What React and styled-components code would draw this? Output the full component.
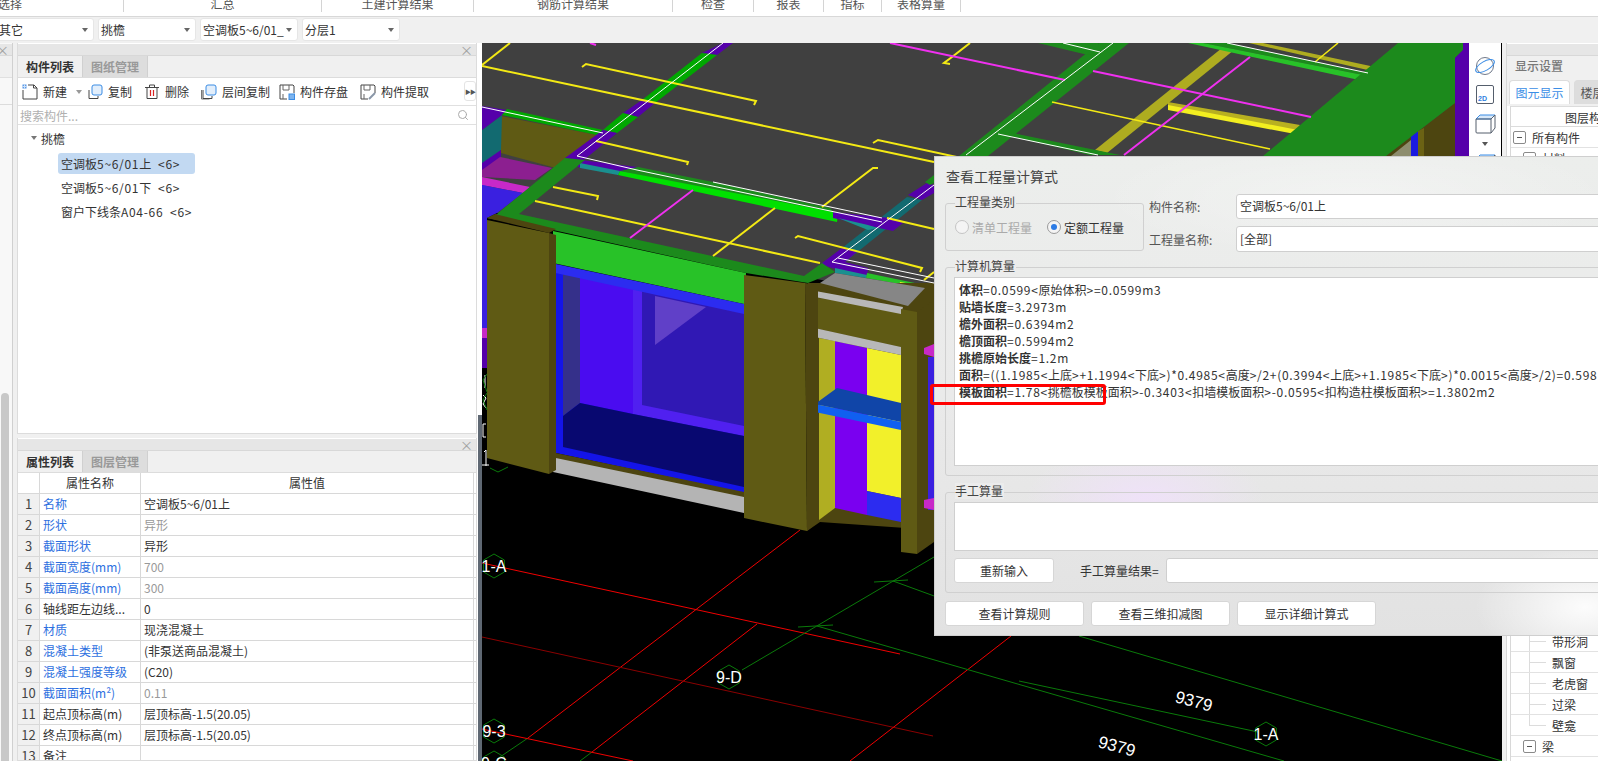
import React from "react";
import styled, { createGlobalStyle } from "styled-components";
import { Search } from "lucide-react";

const FONT = `"Noto Sans CJK SC", "Noto Sans", sans-serif`;

const Global = createGlobalStyle`
  html, body { margin: 0; padding: 0; height: 100%; overflow: hidden; background: #f0f0f0; }
  #root { height: 100%; }
  * { box-sizing: border-box; }
`;

const Page = styled.div`
  position: relative;
  width: 1598px;
  height: 761px;
  overflow: hidden;
  display: flex;
  flex-direction: column;
  font-family: ${FONT};
  font-size: 12px;
  color: #333;
  background: #f0f0f0;
`;

/* top ribbon */
const Ribbon = styled.div`
  height: 17px;
  flex: none;
  display: flex;
  background: #fff;
  border-bottom: 1px solid #d8d8d8;
  overflow: hidden;
`;
const RibbonCell = styled.div`
  width: ${p => p.$w}px;
  height: 12px;
  line-height: 8px;
  text-align: ${p => (p.$start ? "left" : "center")};
  text-indent: ${p => (p.$start ? "-2px" : "0")};
  color: #555;
  white-space: nowrap;
  border-right: 1px solid #d4d4d4;
`;

/* combo row */
const ComboRow = styled.div`
  height: 26px;
  flex: none;
  display: flex;
  gap: 4px;
  padding-top: 1px;
  margin-left: -4px;
`;
const Combo = styled.div`
  width: 98px;
  height: 23px;
  display: flex;
  align-items: center;
  justify-content: space-between;
  padding: 0 5px 0 2px;
  background: #fff;
  border: 1px solid #e6e6e6;
  border-radius: 3px;
  white-space: nowrap;
  &::after {
    content: "";
    border: 3px solid transparent;
    border-top: 4px solid #666;
    border-bottom: 0;
  }
`;

const Body = styled.div`
  flex: 1;
  display: flex;
  min-height: 0;
`;

/* collapsed panel at the far left */
const SideStrip = styled.div`
  width: 13px;
  flex: none;
  margin-right: 4px;
  display: flex;
  flex-direction: column;
  background: #f8f8f8;
  border-right: 1px solid #d0d0d0;
`;
const StripFill = styled.div`
  height: 22px;
  background: #f0f0f0;
  border-bottom: 1px solid #e0e0e0;
`;
const StripTool = styled.div`
  height: 27px;
  border-bottom: 1px solid #dcdcdc;
`;
const ScrollThumb = styled.div`
  flex: 1;
  width: 8px;
  margin: 288px 0 0 1px;
  background: #c8c8c8;
  border-radius: 4px 4px 0 0;
`;

const PanelColumn = styled.div`
  width: 460px;
  flex: none;
  display: flex;
  flex-direction: column;
  gap: 4px;
`;
const Panel = styled.div`
  display: flex;
  flex-direction: column;
  height: ${p => (p.$h ? `${p.$h}px` : "auto")};
  flex: ${p => (p.$h ? "none" : 1)};
  background: #fff;
  border: 1px solid #dcdcdc;
  border-top: 0;
  overflow: hidden;
`;
const Band = styled.div`
  height: 12px;
  flex: none;
  display: flex;
  align-items: center;
  justify-content: flex-end;
  padding-right: 3px;
  margin-top: 1px;
  background: #e6e6e6;
  border-bottom: 1px solid #d8d8d8;
  color: #a0a0a0;
  font-size: 13px;
  line-height: 10px;
`;
const TabRow = styled.div`
  height: 22px;
  flex: none;
  display: flex;
  background: #f0f0f0;
  border-bottom: 1px solid #dcdcdc;
`;
const Tab = styled.div`
  width: 65px;
  display: flex;
  align-items: center;
  justify-content: center;
  font-weight: 700;
  color: ${p => (p.$active ? "#333" : "#999")};
  background: ${p => (p.$active ? "#f0f0f0" : "#dddddd")};
  border-right: 1px solid #d0d0d0;
`;
const Toolbar = styled.div`
  height: 28px;
  flex: none;
  display: flex;
  align-items: center;
  padding-left: 4px;
  border-bottom: 1px solid #e0e0e0;
  position: relative;
`;
const ToolItem = styled.div`
  display: flex;
  align-items: center;
  gap: 5px;
  margin-right: ${p => p.$gap}px;
  white-space: nowrap;
`;
const Caret = styled.span`
  width: 0;
  height: 0;
  margin-left: 4px;
  border: 3px solid transparent;
  border-top: 4px solid #999;
  border-bottom: 0;
`;
const MoreButton = styled.div`
  position: absolute;
  right: 0;
  top: 3px;
  width: 12px;
  height: 20px;
  display: flex;
  align-items: center;
  justify-content: center;
  background: #fff;
  border: 1px solid #e4e4e4;
  border-radius: 3px;
  font-size: 6px;
  letter-spacing: -1px;
  color: #555;
`;
const SearchRow = styled.div`
  height: 19px;
  flex: none;
  display: flex;
  align-items: center;
  justify-content: space-between;
  padding: 0 7px 0 2px;
  color: #b0b0b0;
  border-bottom: 1px solid #e0e0e0;
`;
const Tree = styled.div`
  flex: 1;
  padding: 2px 0 0 13px;
`;
const TreeRoot = styled.div`
  height: 22px;
  margin-bottom: 4px;
  display: flex;
  align-items: center;
  gap: 4px;
  &::before {
    content: "";
    border: 3px solid transparent;
    border-top: 4px solid #777;
    border-bottom: 0;
  }
`;
const TreeItem = styled.div`
  width: 137px;
  height: 21px;
  margin: 0 0 3px 27px;
  padding-left: 3px;
  line-height: 21px;
  border-radius: 3px;
  white-space: pre;
  background: ${p => (p.$selected ? "#c2d9f2" : "transparent")};
`;
const Latin = styled.span`
  letter-spacing: 0.7px;
`;

/* property table */
const TableHead = styled.div`
  height: 21px;
  flex: none;
  display: grid;
  grid-template-columns: 22px 101px 333px;
  line-height: 20px;
  text-align: center;
  border-bottom: 1px solid #d8d8d8;
`;
const Cell = styled.div`
  border-right: 1px solid #d8d8d8;
  padding-left: ${p => p.$pad || 0}px;
  white-space: nowrap;
  overflow: hidden;
  color: ${p => p.$color || "#333"};
`;
const TableRow = styled.div`
  height: 21px;
  flex: none;
  display: grid;
  grid-template-columns: 22px 101px 333px;
  line-height: 20px;
  border-bottom: 1px solid #d8d8d8;
`;
const NumCell = styled.div`
  text-align: center;
  font-size: 13px;
  background: #f0f0f0;
  border-right: 1px solid #d8d8d8;
  color: #444;
`;

const Splitter = styled.div`
  width: 5px;
  flex: none;
  background: linear-gradient(#fff 372px, #5f6873 372px);
  border-left: 1px solid #fff;
`;

/* 3d view */
const Viewport = styled.div`
  position: relative;
  width: 1020px;
  flex: none;
  background: #000;
  overflow: hidden;
`;
const SceneSvg = styled.svg`
  display: block;
  width: 1020px;
  height: 718px;
  text { font-family: "Liberation Sans", sans-serif; fill: #fff; }
`;
const ViewTools = styled.div`
  position: absolute;
  top: 0;
  right: 1px;
  width: 32px;
  height: 300px;
  display: flex;
  flex-direction: column;
  align-items: center;
  gap: 9px;
  padding-top: 13px;
  background: #fff;
`;

/* right panel */
const RightPanel = styled.div`
  flex: 1;
  display: flex;
  flex-direction: column;
  min-width: 0;
  margin-left: 4px;
  background: #fff;
  border-left: 1px solid #d8d8d8;
  overflow: hidden;
`;
const RightTitle = styled.div`
  height: 22px;
  flex: none;
  padding-left: 8px;
  line-height: 19px;
  font-weight: 500;
  color: #777;
  background: #f0f0f0;
  white-space: nowrap;
`;
const RightTabs = styled.div`
  height: 28px;
  flex: none;
  display: flex;
  gap: 4px;
  align-items: flex-end;
  padding: 0 0 2px 2px;
  background: #f0f0f0;
  white-space: nowrap;
`;
const RightTab = styled.div`
  flex: none;
  width: 61px;
  height: 24px;
  line-height: 23px;
  text-align: center;
  color: ${p => (p.$active ? "#3a8ee6" : "#555")};
  background: ${p => (p.$active ? "#fff" : "#dddddd")};
  border: 1px solid #dcdcdc;
  border-bottom: 0;
  border-radius: 4px 4px 0 0;
`;
const LayerBox = styled.div`
  flex: 1;
  margin-left: 3px;
  border-left: 1px solid #d8d8d8;
  white-space: nowrap;
`;
const LayerHead = styled.div`
  height: 21px;
  padding-left: 54px;
  line-height: 21px;
  border-top: 1px solid #dcdcdc;
  border-bottom: 1px solid #dcdcdc;
`;
const LayerRow = styled.div`
  position: relative;
  height: 21px;
  display: flex;
  align-items: center;
  gap: 6px;
  padding-left: ${p => p.$indent}px;
  border-bottom: 1px solid #e2e2e2;
  ${p =>
    p.$leaf &&
    `
    &::before {
      content: "";
      position: absolute;
      left: 18px;
      top: 0;
      bottom: ${p.$last ? "10px" : "0"};
      width: 17px;
      border-left: 1px solid #dcdcdc;
    }
    &::after {
      content: "";
      position: absolute;
      left: 18px;
      top: 10px;
      width: 17px;
      border-top: 1px solid #dcdcdc;
    }
  `}
`;
const LayerGap = styled.div`
  height: 462px;
`;
const Minus = styled.span`
  width: 13px;
  height: 13px;
  flex: none;
  display: flex;
  align-items: center;
  justify-content: center;
  border: 1px solid #8a8a8a;
  border-radius: 2px;
  &::before {
    content: "";
    width: 5px;
    border-top: 1px solid #555;
  }
`;

/* dialog */
const Dialog = styled.div`
  position: absolute;
  left: 934px;
  top: 156px;
  width: 720px;
  height: 480px;
  padding-left: 10px;
  border: 1px solid #cfcfcf;
  background:
    radial-gradient(ellipse 260px 60px at 420px 40px, rgba(255, 255, 255, 0.35), transparent),
    radial-gradient(ellipse 120px 50px at 210px 340px, rgba(240, 225, 250, 0.9), transparent),
    radial-gradient(ellipse 110px 60px at 650px 450px, rgba(255, 255, 255, 0.9), transparent),
    linear-gradient(#eceeec 0, #eaeaea 50%, #e2e2e2 100%);
`;
const DialogTitle = styled.div`
  height: 37px;
  padding: 9px 0 0 1px;
  font-size: 14px;
  line-height: 20px;
  color: #444;
`;
const TopRow = styled.div`
  display: flex;
  height: 73px;
`;
const Group = styled.div`
  position: relative;
  flex: none;
  width: ${p => p.$w}px;
  height: ${p => p.$h}px;
  margin-top: ${p => p.$top || 0}px;
  padding: ${p => p.$pad || "9px 0 0 8px"};
  border: 1px solid #d0d0d0;
  border-radius: 3px;
`;
const Legend = styled.span`
  position: absolute;
  left: 9px;
  top: -10px;
  padding: 0 1px 0 0;
  line-height: 16px;
  background: #ececec;
  color: #444;
`;
const RadioRow = styled.div`
  display: flex;
  align-items: center;
  height: 100%;
  padding: 0 0 0 9px;
  gap: 15px;
`;
const RadioItem = styled.div`
  display: flex;
  align-items: center;
  gap: 3px;
  white-space: nowrap;
  color: ${p => (p.$off ? "#aaa" : "#333")};
`;
const RadioDot = styled.span`
  width: 14px;
  height: 14px;
  flex: none;
  display: flex;
  align-items: center;
  justify-content: center;
  background: #f4f4f4;
  border: 1px solid ${p => (p.$off ? "#c4c4c4" : "#9a9a9a")};
  border-radius: 50%;
  &::before {
    content: "";
    width: 6px;
    height: 6px;
    border-radius: 50%;
    background: ${p => (p.$off ? "transparent" : "#2c7be5")};
  }
`;
const FormCol = styled.div`
  display: flex;
  flex-direction: column;
  gap: 7px;
  margin-left: 5px;
`;
const FormRow = styled.div`
  display: flex;
  align-items: center;
`;
const FormLabel = styled.div`
  width: 87px;
  flex: none;
  color: #555;
`;
const Field = styled.div`
  width: ${p => p.$w}px;
  height: ${p => p.$h}px;
  flex: none;
  padding-left: 3px;
  line-height: ${p => p.$h - 3}px;
  background: #fff;
  border: 1px solid #cfcfcf;
  border-radius: 3px;
  color: #333;
`;
const OutputBox = styled.div`
  width: ${p => p.$w}px;
  height: ${p => p.$h}px;
  padding: 3px 0 0 4px;
  line-height: 17px;
  background: #fff;
  border: 1px solid #cfcfcf;
  white-space: nowrap;
  overflow: hidden;
`;
const ManualRow = styled.div`
  display: flex;
  align-items: center;
  margin-top: 7px;
`;
const ManualLabel = styled.div`
  width: 112px;
  flex: none;
  padding-left: 26px;
  white-space: nowrap;
`;
const Btn = styled.div`
  width: ${p => p.$w}px;
  height: ${p => p.$h}px;
  flex: none;
  display: flex;
  align-items: center;
  justify-content: center;
  background: #fff;
  border: 1px solid #d6d6d6;
  border-radius: 3px;
`;
const BtnRow = styled.div`
  display: flex;
  gap: 7px;
  margin-top: 8px;
`;
const RedMark = styled.div`
  position: absolute;
  left: 930px;
  top: 384px;
  width: 176px;
  height: 21px;
  border: 3px solid #f00;
  border-radius: 3px;
`;

// latin runs in the app's font sit wider than the CJK stack we have here
const Mixed = ({ text }) =>
  text.split(/([\u0000-\u00ff]+)/).map((part, i) => (i % 2 ? <Latin key={i}>{part}</Latin> : part));

/* icons */
const Svg = ({ children, size = 16 }) => (
  <svg width={size} height={size} viewBox="0 0 16 16" fill="none" style={{ flex: "none" }}>
    {children}
  </svg>
);
const NewIcon = () => (
  <Svg>
    <path d="M1 6v9h14V4l-3-3H6" stroke="#444" />
    <path d="M11.500 1v3h3.500" stroke="#444" />
    <rect x="0.500" y="0.500" width="4" height="4" fill="#5b9ae8" />
    <path d="M2.500 .5v4M.5 2.500h4" stroke="#cfe2f8" />
  </Svg>
);
const CopyIcon = ({ extra }) => (
  <Svg>
    {extra && <path d="M0.500 6v9h8" stroke="#777" />}
    <path d="M2 6v8.500h9V12" stroke="#444" />
    <rect x="5" y="1" width="10" height="10" rx="2" fill="#e2eefb" stroke="#3b8ce4" />
  </Svg>
);
const TrashIcon = () => (
  <Svg>
    <path d="M1 3.500h14M5.500 3V1h5v2M3 3.500v11h10v-11" stroke="#444" />
    <path d="M6.500 6v6M9.500 6v6" stroke="#d82020" strokeWidth="1.200" />
  </Svg>
);
const SaveIcon = () => (
  <Svg>
    <path d="M8 15H1V1h13l1 1v7" stroke="#444" />
    <path d="M4 1v5h6V1M4 15v-5" stroke="#666" />
    <rect x="10" y="10" width="5.500" height="5.500" fill="#7db4ee" stroke="#3b8ce4" />
  </Svg>
);
const PickIcon = () => (
  <Svg>
    <path d="M8 15H1V1h13l1 1v7" stroke="#444" />
    <path d="M4 1v5h6V1M4 15v-5" stroke="#666" />
    <path d="M9 15l6-6" stroke="#8a97a8" strokeWidth="2" />
  </Svg>
);
const SphereIcon = () => (
  <svg width="22" height="20" viewBox="0 0 22 20" fill="none">
    <circle cx="11" cy="10" r="8.500" stroke="#70798a" />
    <ellipse cx="11" cy="10" rx="10.500" ry="4.500" transform="rotate(-30 11 10)" stroke="#3b8ce4" />
  </svg>
);
const TwoDIcon = () => (
  <svg width="20" height="20" viewBox="0 0 20 20" fill="none">
    <rect x="1.500" y="0.500" width="17" height="18" rx="1.500" stroke="#555e6c" />
    <text x="3" y="16" fontSize="7" fontWeight="700" fill="#2f7fe0" fontFamily="Liberation Sans">2D</text>
  </svg>
);
const CubeIcon = () => (
  <svg width="21" height="20" viewBox="0 0 21 20" fill="none">
    <path d="M1 5l4-4h15l-4 4z" fill="#d8e8f8" stroke="#3b8ce4" />
    <path d="M1 5h15v14H2a1 1 0 0 1-1-1zM16 5l4-4v13l-4 5" stroke="#555e6c" />
  </svg>
);
const SmallDown = styled.span`
  width: 0;
  height: 0;
  margin: -1px 0;
  border: 3px solid transparent;
  border-top: 4px solid #555;
  border-bottom: 0;
`;

/* scene: fill, points */
const P = (fill, points) => ({ fill, points });
const OLIVE = "#5f5a14";
const DARK_OLIVE = "#4d4510";
const GREEN = "#1c8a1c";
const BRIGHT = "#28c228";
const PURPLE = "#5500aa";

const polys = [
  P("#404040", "482,43 1469,43 1469,156 934,300 805,277 497,213 482,213"),
  // left strip
  P("#3a20e0", "482,185 487,185 487,328 482,328"),
  P("#c829c8", "482,328 487,328 487,338 482,338"),
  P(PURPLE, "482,338 487,338 487,368 482,368"),
  // upper-left block
  P(OLIVE, "501,116 597,135 556,168 501,153"),
  P("#126a70", "482,130 502,115 501,150 482,165"),
  P(PURPLE, "482,106 507,110 502,115 482,130"),
  P(PURPLE, "482,163 501,150 501,157 482,172"),
  P("#8c1f90", "482,170 500,157 552,168 535,180 482,177"),
  P("#c829c8", "482,177 530,187 523,193 482,185"),
  P("#3a20e0", "482,185 523,193 497,213 487,218 482,218"),
  // top-left beams
  P("#00a800", "507,109 603,130 597,135 502,115"),
  P(PURPLE, "723,43 733,43 717,55 702,53"),
  P("#00a800", "702,53 717,55 655,103 642,100"),
  P(PURPLE, "642,100 655,103 638,117 623,113"),
  P("#00a800", "623,113 638,117 617,133 603,130"),
  P(PURPLE, "603,130 617,133 580,163 565,158"),
  P(PURPLE, "565,158 637,167 637,173 580,168"),
  // long middle beam
  P("#1a9090", "580,163 620,171 618,175 580,168"),
  P(GREEN, "638,167 713,182 830,208 838,217 620,171"),
  P("#00e000", "620,171 838,213 837,222 618,175"),
  P("#126a70", "907,197 922,200 845,262 842,248"),
  P(PURPLE, "833,212 890,218 903,223 893,231 833,218"),
  P("#1a9090", "838,218 868,225 878,228 868,230"),
  P(PURPLE, "908,195 927,183 934,185 934,193 922,200"),
  P(GREEN, "925,182 934,175 934,183 930,185"),
  P(PURPLE, "822,263 842,248 857,252 845,262 868,268 867,278 822,265"),
  P("#1a9090", "835,268 867,275 866,278 835,273"),
  P(BRIGHT, "867,273 934,287 934,290 866,278"),
  P("#f2ee20", "900,282 929,287 927,290 899,286"),
  // slab edges
  P(GREEN, "565,158 585,160 519,214 497,214"),
  P(GREEN, "497,214 519,214 804,276 822,263 835,272 808,283 746,273 553,230 487,218"),
  P(BRIGHT, "553,231 746,273 744,304 553,263"),
  // window
  P("#1414e8", "556,270 744,310 744,493 556,453"),
  P("#3018b4", "633,285 744,310 744,436 633,414"),
  P("#6040c8", "655,296 706,307 655,345"),
  P("#5020f0", "633,285 642,288 642,405 744,426 744,436 633,414"),
  P("#35308a", "563,272 580,276 580,403 563,416"),
  P("#4a0cf0", "580,276 633,287 633,414 580,403"),
  P("#080870", "563,416 580,403 633,414 744,436 744,487 563,447"),
  P("#2c2cf0", "551,263 744,304 744,314 551,272"),
  // sill
  P(DARK_OLIVE, "551,452 744,492 744,499 551,459"),
  P("#b4b4b4", "551,457 744,497 744,513 553,472"),
  // left pillar
  P(DARK_OLIVE, "487,218 495,214 556,229 549,233"),
  P(OLIVE, "487,220 549,233 549,474 487,458"),
  P(DARK_OLIVE, "549,233 556,235 556,470 549,474"),
  // right hand bay
  P(DARK_OLIVE, "808,283 934,283 934,530 820,522 807,531"),
  P("#868686", "820,283 835,273 925,288 908,306"),
  P("#b0ae22", "819,338 835,341 835,508 819,520"),
  P("#7a00f0", "835,341 867,348 867,515 835,508"),
  P("#f2f02a", "867,348 901,355 901,498 867,491"),
  P("#2c2cf0", "867,491 901,498 901,522 867,515"),
  P(OLIVE, "810,297 901,310 901,347 810,327"),
  P("#b8b8b8", "810,290 903,307 901,314 810,296"),
  P("#b8b8b8", "810,327 901,347 901,355 810,336"),
  P("#1045a8", "815,404 837,388 901,403 901,422"),
  P("#1060f0", "815,404 901,422 901,430 815,412"),
  P(OLIVE, "744,275 805,283 807,531 744,518"),
  P(DARK_OLIVE, "805,283 818,285 818,522 807,531"),
  P(OLIVE, "901,309 917,312 917,554 901,552"),
  P(DARK_OLIVE, "917,312 934,300 934,542 917,554"),
  P("#3a20e0", "928,357 934,357 934,510 928,510"),
  P("#c829c8", "924,348 934,344 934,357 924,354"),
  P("#c829c8", "924,500 934,498 934,510 924,508"),
  // upper right area
  P("#aeac20", "1222,48 1234,50 1107,153 1095,150"),
  P("#b8b020", "1168,102 1300,125 1295,132 1168,107"),
  P("#f2ee20", "1168,105 1298,130 1295,134 1168,110"),
  P(GREEN, "1099,43 1129,43 988,156 959,156"),
  P(GREEN, "997,133 1008,132 1120,155 1090,155"),
  P(GREEN, "1038,43 1098,43 1100,52 1088,55"),
  P("#aeac20", "1249,43 1263,43 1375,67 1372,71"),
  P(GREEN, "1203,43 1227,43 1368,73 1363,75"),
  P(BRIGHT, "1188,43 1203,43 1363,75 1359,80"),
  P(DARK_OLIVE, "1455,103 1386,156 1469,156 1469,103"),
  P("#8d8d6e", "1391,156 1411,140 1411,156"),
  P("#1a1ae0", "1411,135 1418,131 1418,156 1411,156"),
  P("#6b6214", "1418,131 1424,128 1424,156 1418,156"),
  P(GREEN, "1398,43 1463,43 1463,50 1455,58 1455,103 1386,156 1263,156"),
  P(PURPLE, "1463,43 1469,43 1469,156 1455,156 1455,58 1463,50")
];

/* scene: stroke, width, points */
const L = (stroke, width, points) => ({ stroke, width, points });
const YEL = "#f4ea14";
const MAG = "#f030f0";
const RED = "#f00000";
const LINE_GREEN = "#0a7a0a";

const roofLines = [
  L(YEL, 2, "482,65 510,43"),
  L(YEL, 2, "482,66 934,162"),
  L(YEL, 2, "582,67 586,64 756,101 754,105"),
  L(YEL, 2, "596,141 688,162 687,165"),
  L(YEL, 2, "553,187 598,196 597,200"),
  L(YEL, 2, "535,201 820,263"),
  L(YEL, 2, "713,256 775,208"),
  L(YEL, 2, "822,207 873,168 878,168"),
  L(YEL, 2, "873,143 878,140 980,162"),
  L(YEL, 2, "795,238 798,236 922,268 920,272"),
  L(YEL, 2, "887,218 934,229"),
  L(YEL, 2, "924,280 934,272"),
  L(YEL, 2, "970,43 952,57 944,63 950,64"),
  L(YEL, 1.500, "1052,102 1270,149"),
  L(YEL, 1.500, "1338,43 1315,62"),
  L(MAG, 2, "590,43 596,45"),
  L(MAG, 2, "890,43 1065,80"),
  L(MAG, 2, "630,238 693,190"),
  L(MAG, 2, "1093,71 1311,117"),
  L(MAG, 2, "1124,155 1250,57")
];
const whiteLines = [
  L("#fff", 1, "482,107 603,133"),
  L("#fff", 1, "723,43 577,156 637,170"),
  L("#fff", 1, "637,170 882,222"),
  L("#fff", 1, "713,182 882,218"),
  L("#fff", 1, "934,185 832,262 934,283"),
  L("#fff", 1, "838,258 934,278"),
  L("#fff", 1, "1113,43 966,155"),
  L("#fff", 1, "998,134 1098,155"),
  L("#fff", 1, "1063,43 1100,52"),
  L("#fff", 1, "1227,43 1368,73")
];
const groundLines = [
  L(RED, 1, "482,563 900,654"),
  L(RED, 1, "800,530 528,738"),
  L(LINE_GREEN, 1, "528,738 497,759"),
  L(RED, 1, "757,624 592,752"),
  L(LINE_GREEN, 1, "592,752 580,761"),
  L("#8a0000", 1, "482,637 933,736"),
  L(RED, 1, "1011,636 850,761"),
  L(RED, 1, "482,729 633,761"),
  L(LINE_GREEN, 1, "742,670 934,557"),
  L(LINE_GREEN, 1, "817,626 1284,761"),
  L(LINE_GREEN, 1, "798,627 833,625"),
  L(LINE_GREEN, 1, "874,582 908,580"),
  L(LINE_GREEN, 1, "893,581 1000,620"),
  L(LINE_GREEN, 1, "1079,636 1502,761"),
  L(LINE_GREEN, 1, "1019,681 1258,732")
];
const edgeBits = [
  L("#fff", 1, "485,375 485,388"),
  L(LINE_GREEN, 1, "487,374 483,380 487,392"),
  L("#fff", 1, "483,395 486,398 483,404 486,408"),
  L(LINE_GREEN, 1, "487,393 483,400 487,410"),
  L("#fff", 1, "486,424 483,424 483,437 486,437"),
  L("#fff", 1, "484,452 486,450 486,466"),
  L("#fff", 1, "478,465 489,465"),
  L("#fff", 1, "482,461 478,465 482,469"),
  L(LINE_GREEN, 1, "490,468 498,472 508,467")
];

const hexPoints = (cx, cy, r) =>
  [0, 1, 2, 3, 4, 5]
    .map(i => {
      const a = (Math.PI / 3) * i - Math.PI / 2;
      return `${cx + r * Math.cos(a)},${cy + r * Math.sin(a)}`;
    })
    .join(" ");

const axisTags = [
  { x: 494, y: 566, label: "1-A" },
  { x: 729, y: 677, label: "9-D" },
  { x: 494, y: 731, label: "9-3" },
  { x: 494, y: 763, label: "9-C" },
  { x: 1266, y: 734, label: "1-A" }
];

const Lines = ({ items }) =>
  items.map((l, i) => (
    <polyline key={i} points={l.points} stroke={l.stroke} strokeWidth={l.width} fill="none" />
  ));

const Scene = () => (
  <SceneSvg viewBox="482 43 1020 718">
    <Lines items={groundLines} />
    {polys.map((p, i) => (
      <polygon key={i} points={p.points} fill={p.fill} />
    ))}
    <Lines items={roofLines} />
    <Lines items={whiteLines} />
    <Lines items={edgeBits} />
    {axisTags.map(t => (
      <g key={t.label + t.x}>
        <polygon points={hexPoints(t.x, t.y, 12)} fill="none" stroke={LINE_GREEN} />
        <text x={t.x} y={t.y + 6} fontSize="16" textAnchor="middle">{t.label}</text>
      </g>
    ))}
    <text x="1194" y="707" fontSize="17" textAnchor="middle" transform="rotate(15 1194 701)">9379</text>
    <text x="1117" y="752" fontSize="17" textAnchor="middle" transform="rotate(15 1117 746)">9379</text>
  </SceneSvg>
);

const ribbon = [
  { w: 124, label: "选择", start: true },
  { w: 198, label: "汇总" },
  { w: 152, label: "土建计算结果" },
  { w: 199, label: "钢筋计算结果" },
  { w: 81, label: "检查" },
  { w: 70, label: "报表" },
  { w: 58, label: "指标" },
  { w: 79, label: "表格算量" }
];

const props = [
  ["名称", "空调板5~6/01上", true, false],
  ["形状", "异形", true, true],
  ["截面形状", "异形", true, false],
  ["截面宽度(mm)", "700", true, true],
  ["截面高度(mm)", "300", true, true],
  ["轴线距左边线...", "0", false, false],
  ["材质", "现浇混凝土", true, false],
  ["混凝土类型", "(非泵送商品混凝土)", true, false],
  ["混凝土强度等级", "(C20)", true, false],
  ["截面面积(m²)", "0.11", true, true],
  ["起点顶标高(m)", "层顶标高-1.5(20.05)", false, false],
  ["终点顶标高(m)", "层顶标高-1.5(20.05)", false, false],
  ["备注", "", false, false]
];

const formulas = [
  ["体积", "=0.0599<原始体积>=0.0599m3"],
  ["贴墙长度", "=3.2973m"],
  ["檐外面积", "=0.6394m2"],
  ["檐顶面积", "=0.5994m2"],
  ["挑檐原始长度", "=1.2m"],
  ["面积", "=((1.1985<上底>+1.1994<下底>)*0.4985<高度>/2+(0.3994<上底>+1.1985<下底>)*0.0015<高度>/2)=0.598"],
  ["模板面积", "=1.78<挑檐板模板面积>-0.3403<扣墙模板面积>-0.0595<扣构造柱模板面积>=1.3802m2"]
];

const App = () => {
  return (
    <Page>
      <Global />
      <Ribbon>
        {ribbon.map(r => (
          <RibbonCell key={r.label} $w={r.w} $start={r.start}>
            {r.label}
          </RibbonCell>
        ))}
      </Ribbon>
      <ComboRow>
        <Combo>其它</Combo>
        <Combo>挑檐</Combo>
        <Combo>空调板5~6/01_</Combo>
        <Combo>分层1</Combo>
      </ComboRow>
      <Body>
        <SideStrip>
          <Band>×</Band>
          <StripFill />
          <StripTool />
          <ScrollThumb />
        </SideStrip>
        <PanelColumn>
          <Panel $h={391}>
            <Band>×</Band>
            <TabRow>
              <Tab $active>构件列表</Tab>
              <Tab>图纸管理</Tab>
            </TabRow>
            <Toolbar>
              <ToolItem $gap={5}><NewIcon />新建<Caret /></ToolItem>
              <ToolItem $gap={12}><CopyIcon />复制</ToolItem>
              <ToolItem $gap={12}><TrashIcon />删除</ToolItem>
              <ToolItem $gap={9}><CopyIcon extra />层间复制</ToolItem>
              <ToolItem $gap={12}><SaveIcon />构件存盘</ToolItem>
              <ToolItem $gap={0}><PickIcon />构件提取</ToolItem>
              <MoreButton>▶▶</MoreButton>
            </Toolbar>
            <SearchRow>
              搜索构件...
              <Search size={12} color="#aaa" />
            </SearchRow>
            <Tree>
              <TreeRoot>挑檐</TreeRoot>
              <TreeItem $selected><Mixed text="空调板5~6/01上  <6>" /></TreeItem>
              <TreeItem><Mixed text="空调板5~6/01下  <6>" /></TreeItem>
              <TreeItem><Mixed text="窗户下线条A04-66  <6>" /></TreeItem>
            </Tree>
          </Panel>
          <Panel>
            <Band>×</Band>
            <TabRow>
              <Tab $active>属性列表</Tab>
              <Tab>图层管理</Tab>
            </TabRow>
            <TableHead>
              <Cell />
              <Cell>属性名称</Cell>
              <Cell>属性值</Cell>
            </TableHead>
            {props.map((row, i) => (
              <TableRow key={row[0]}>
                <NumCell>{i + 1}</NumCell>
                <Cell $pad={3} $color={row[2] ? "#2d6fe0" : "#333"}>{row[0]}</Cell>
                <Cell $pad={3} $color={row[3] ? "#999" : "#333"}>{row[1]}</Cell>
              </TableRow>
            ))}
          </Panel>
        </PanelColumn>
        <Splitter />
        <Viewport>
          <Scene />
          <ViewTools>
            <SphereIcon />
            <TwoDIcon />
            <CubeIcon />
            <SmallDown />
            <CubeIcon />
          </ViewTools>
        </Viewport>
        <RightPanel>
          <Band />
          <RightTitle>显示设置</RightTitle>
          <RightTabs>
            <RightTab $active>图元显示</RightTab>
            <RightTab>楼层显示</RightTab>
          </RightTabs>
          <LayerBox>
            <LayerHead>图层构件</LayerHead>
            <LayerRow $indent={2}><Minus />所有构件</LayerRow>
            <LayerRow $indent={12}><Minus />材料</LayerRow>
            <LayerGap />
            <LayerRow $indent={41} $leaf>带形洞</LayerRow>
            <LayerRow $indent={41} $leaf>飘窗</LayerRow>
            <LayerRow $indent={41} $leaf>老虎窗</LayerRow>
            <LayerRow $indent={41} $leaf>过梁</LayerRow>
            <LayerRow $indent={41} $leaf $last>壁龛</LayerRow>
            <LayerRow $indent={12}><Minus />梁</LayerRow>
          </LayerBox>
        </RightPanel>
      </Body>

      <Dialog>
        <DialogTitle>查看工程量计算式</DialogTitle>
        <TopRow>
          <Group $w={199} $h={48} $top={9} $pad="0">
            <Legend>工程量类别</Legend>
            <RadioRow>
              <RadioItem $off><RadioDot $off />清单工程量</RadioItem>
              <RadioItem><RadioDot />定额工程量</RadioItem>
            </RadioRow>
          </Group>
          <FormCol>
            <FormRow>
              <FormLabel>构件名称:</FormLabel>
              <Field $w={420} $h={25}>空调板5~6/01上</Field>
            </FormRow>
            <FormRow>
              <FormLabel>工程量名称:</FormLabel>
              <Field $w={420} $h={26}>[全部]</Field>
            </FormRow>
          </FormCol>
        </TopRow>
        <Group $w={690} $h={209}>
          <Legend>计算机算量</Legend>
          <OutputBox $w={660} $h={189}>
            {formulas.map(f => (
              <div key={f[0]}><b>{f[0]}</b><Mixed text={f[1]} /></div>
            ))}
          </OutputBox>
        </Group>
        <Group $w={690} $h={101} $top={16}>
          <Legend>手工算量</Legend>
          <OutputBox $w={660} $h={49} />
          <ManualRow>
            <Btn $w={100} $h={25}>重新输入</Btn>
            <ManualLabel>手工算量结果=</ManualLabel>
            <Field $w={500} $h={25} />
          </ManualRow>
        </Group>
        <BtnRow>
          <Btn $w={139} $h={25}>查看计算规则</Btn>
          <Btn $w={139} $h={25}>查看三维扣减图</Btn>
          <Btn $w={139} $h={25}>显示详细计算式</Btn>
        </BtnRow>
      </Dialog>
      <RedMark />
    </Page>
  );
};

export default App;
